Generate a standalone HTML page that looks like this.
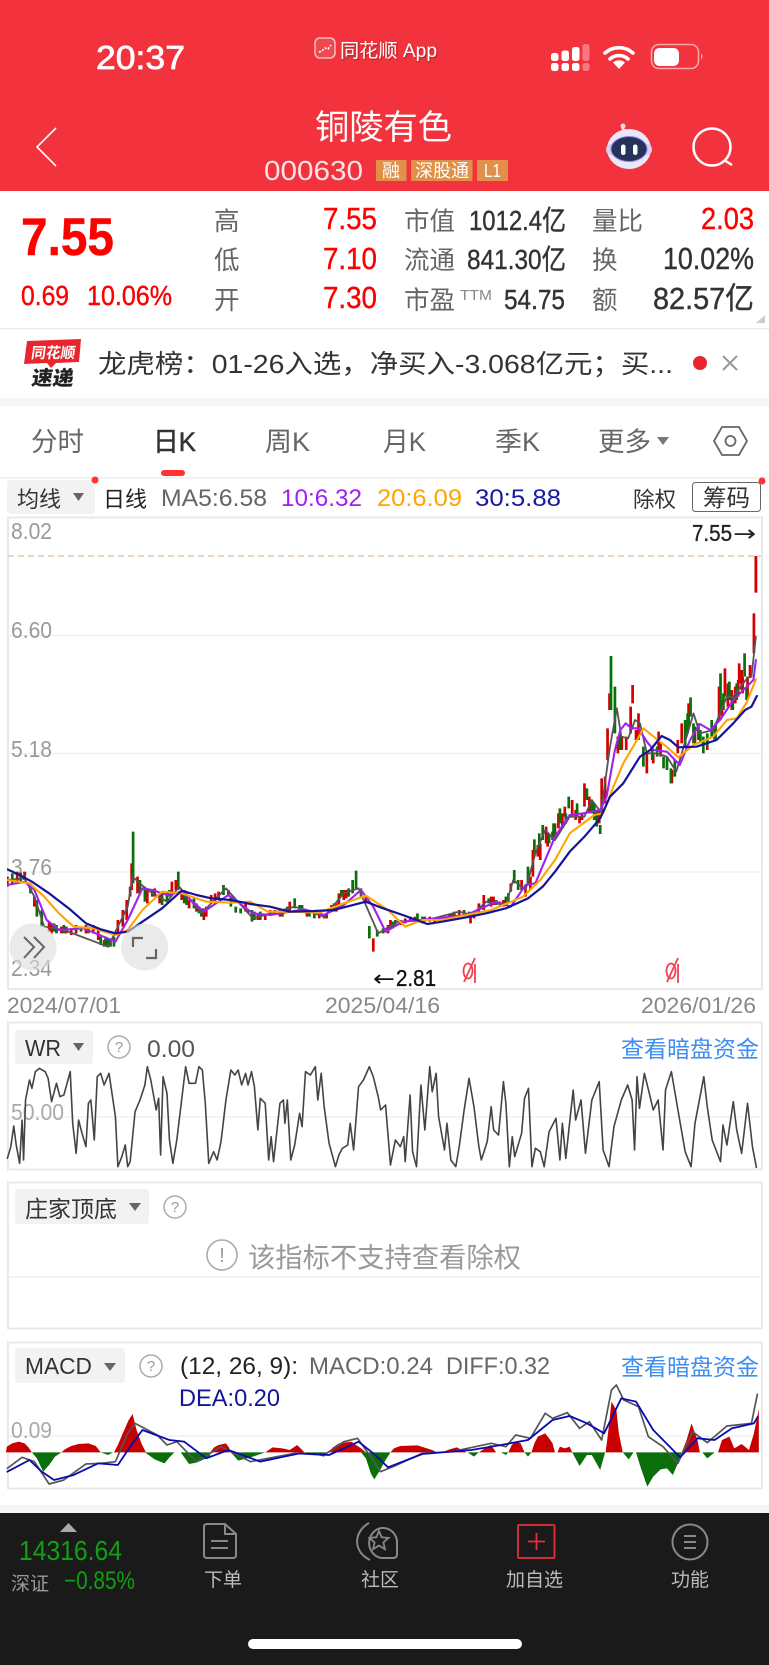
<!DOCTYPE html>
<html lang="zh"><head><meta charset="utf-8"><title>铜陵有色</title>
<style>
html,body{margin:0;padding:0;background:#fff}
svg{display:block}
text{font-family:"Liberation Sans","Noto Sans CJK SC",sans-serif}
.v *{vector-effect:non-scaling-stroke}
.l{fill:none;stroke-linejoin:round;stroke-linecap:round}
</style></head><body>
<svg width="769" height="1665" viewBox="0 0 769 1665" xmlns="http://www.w3.org/2000/svg">
<defs><clipPath id="c"><rect x="7" y="518" width="755" height="470"/></clipPath>
<filter id="s" x="-10%" y="-20%" width="120%" height="150%"><feDropShadow dx="1" dy="1" stdDeviation=".7" flood-color="#7a1016" flood-opacity=".6"/></filter></defs>
<rect width="769" height="1665" fill="#fff"/>
<rect width="769" height="191" fill="#f2323c"/>
<!-- status -->
<text x="96" y="69" font-size="33" font-weight="400" stroke="#fff" stroke-width=".7" fill="#fff" textLength="89" lengthAdjust="spacingAndGlyphs">20:37</text>
<rect x="315" y="38" width="20" height="20" rx="5" fill="#f04a50" stroke="#f9c0c2" stroke-width="1.500"/>
<path d="M319 52l3-1 3-3 3 1 3-4" stroke="#fff" stroke-width="1.600" fill="none" stroke-dasharray="2 1.500"/>
<text x="340" y="57" font-size="19" fill="#fff" filter="url(#s)" textLength="97" lengthAdjust="spacingAndGlyphs">同花顺 App</text>
<g fill="#fff">
<rect x="551" y="53" width="7.500" height="8" rx="2.500"/><rect x="561.500" y="50.500" width="7.500" height="10.500" rx="2.500"/><rect x="572" y="47" width="7.500" height="14" rx="2.500"/>
<rect x="551" y="63" width="7.500" height="8" rx="2.500"/><rect x="561.500" y="63" width="7.500" height="8" rx="2.500"/><rect x="572" y="63" width="7.500" height="8" rx="2.500"/>
<rect x="582.500" y="44" width="7" height="17" rx="2.500" opacity=".35"/><rect x="582.500" y="63" width="7" height="8" rx="2.500" opacity=".35"/>
<path d="M619 69l-6-6.500a9 9 0 0 1 12 0z"/>
</g>
<path d="M605 53a21 21 0 0 1 28 0M610 59a13.500 13.500 0 0 1 18 0" fill="none" stroke="#fff" stroke-width="3.600" stroke-linecap="round"/>
<rect x="651.500" y="44.500" width="47" height="24" rx="7.500" fill="none" stroke="#f9a8ac" stroke-width="1.500"/>
<rect x="654" y="48" width="25" height="18" rx="5.500" fill="#fff"/>
<path d="M701 53q3 3.500 0 7z" fill="#f9a8ac"/>
<!-- nav -->
<path d="M56 128L37 147 56 166" fill="none" stroke="#fff" stroke-width="1.600"/>
<text x="315" y="139" font-size="34" fill="#fff" textLength="137" lengthAdjust="spacingAndGlyphs">铜陵有色</text>
<text x="264" y="180" font-size="28" fill="#fbe3e4" textLength="99" lengthAdjust="spacingAndGlyphs">000630</text>
<g fill="#e09049"><rect x="376" y="160" width="30.500" height="21"/><rect x="411" y="160" width="61.500" height="21"/><rect x="477" y="160" width="31" height="21"/></g>
<g fill="#fff" font-size="18"><text x="382" y="177">融</text><text x="415" y="177" textLength="54" lengthAdjust="spacingAndGlyphs">深股通</text><text x="484" y="177" textLength="17" lengthAdjust="spacingAndGlyphs">L1</text></g>
<!-- robot -->
<path d="M625 130q-4-1-2-4" stroke="#f4e6e6" stroke-width="2" fill="none"/><circle cx="623" cy="126" r="2.500" fill="#f2dede"/>
<ellipse cx="629" cy="149" rx="22" ry="20" fill="#e9e8f8"/>
<rect x="606" y="144" width="46" height="11" rx="5" fill="#d3d1ee"/>
<ellipse cx="629" cy="149" rx="18" ry="12.500" fill="#25325a" stroke="#9c7be8" stroke-width="1"/>
<rect x="621" y="144.500" width="4.500" height="10.500" rx="2.200" fill="#fff"/><rect x="633" y="144.500" width="4.500" height="10.500" rx="2.200" fill="#fff"/>
<circle cx="712" cy="147" r="18.500" fill="none" stroke="#fff" stroke-width="2.500"/><path d="M724 160L732 165" stroke="#fff" stroke-width="2.500"/>
<!-- quote -->
<g fill="#f00" stroke="#f00" stroke-width=".4">
<text x="21" y="255" font-size="53" font-weight="700" textLength="93" lengthAdjust="spacingAndGlyphs">7.55</text>
<text x="21" y="305" font-size="28" textLength="48" lengthAdjust="spacingAndGlyphs">0.69</text>
<text x="87" y="305" font-size="28" textLength="85" lengthAdjust="spacingAndGlyphs">10.06%</text>
<g font-size="30.500"><text x="323" y="229" textLength="54" lengthAdjust="spacingAndGlyphs">7.55</text><text x="323" y="269" textLength="54" lengthAdjust="spacingAndGlyphs">7.10</text><text x="323" y="308" textLength="54" lengthAdjust="spacingAndGlyphs">7.30</text><text x="701" y="229" textLength="53" lengthAdjust="spacingAndGlyphs">2.03</text></g>
</g>
<g fill="#666" font-size="25.500">
<text x="214" y="230">高</text><text x="214" y="269">低</text><text x="214" y="309">开</text>
<text x="404" y="230">市值</text><text x="404" y="269">流通</text><text x="404" y="309">市盈</text>
<text x="592" y="230">量比</text><text x="592" y="269">换</text><text x="592" y="309">额</text>
</g>
<text x="460" y="300" font-size="15" fill="#888" textLength="32" lengthAdjust="spacingAndGlyphs">TTM</text>
<g fill="#333" stroke="#333" stroke-width=".4" font-size="28">
<text x="469" y="230" textLength="97" lengthAdjust="spacingAndGlyphs">1012.4亿</text>
<text x="467" y="269" textLength="99" lengthAdjust="spacingAndGlyphs">841.30亿</text>
<text x="504" y="309" textLength="61" lengthAdjust="spacingAndGlyphs">54.75</text>
<text x="663" y="269" font-size="30.500" textLength="91" lengthAdjust="spacingAndGlyphs">10.02%</text>
<text x="653" y="309" font-size="30.500" textLength="101" lengthAdjust="spacingAndGlyphs">82.57亿</text>
</g>
<path d="M765 315v8h-9z" fill="#ccc"/>
<rect y="328" width="769" height="1.500" fill="#ebebeb"/>
<!-- news -->
<path d="M27 341L81 339 79 362 56 363 51 368 47 363 24 364z" fill="#e8262e"/>
<text x="31" y="358" font-size="15" font-weight="700" fill="#fff" transform="skewX(-8) translate(50 0)" textLength="44" lengthAdjust="spacingAndGlyphs">同花顺</text>
<text x="32" y="385" font-size="20" font-weight="900" fill="#222" transform="skewX(-8) translate(53 0)" textLength="42" lengthAdjust="spacingAndGlyphs">速递</text>
<text x="98" y="373" font-size="26" fill="#333" textLength="575" lengthAdjust="spacingAndGlyphs">龙虎榜&#xFF1A;01-26入选&#xFF0C;净买入-3.068亿元&#xFF1B;买...</text>
<circle cx="700" cy="363" r="7" fill="#e8252e"/>
<path d="M723 356l14 14M737 356l-14 14" stroke="#999" stroke-width="2"/>
<rect y="398" width="769" height="8" fill="#f5f5f5"/>
<!-- tabs -->
<g font-size="26.500" fill="#666">
<text x="31" y="451">分时</text>
<text x="265" y="451" textLength="45" lengthAdjust="spacingAndGlyphs">周K</text>
<text x="383" y="451" textLength="43" lengthAdjust="spacingAndGlyphs">月K</text>
<text x="495" y="451" textLength="45" lengthAdjust="spacingAndGlyphs">季K</text>
<text x="598" y="451">更多</text>
<text x="153" y="451" fill="#333" stroke="#333" stroke-width=".5" textLength="43" lengthAdjust="spacingAndGlyphs">日K</text>
</g>
<path d="M657 437h12l-6 8z" fill="#777"/>
<path d="M714 441L722 427H739L747 441 739 455H722z" fill="none" stroke="#666" stroke-width="1.800"/><circle cx="730.500" cy="441" r="5" fill="none" stroke="#666" stroke-width="1.800"/>
<rect x="161" y="470" width="24" height="6" rx="3" fill="#f33"/>
<rect y="477" width="769" height="1.500" fill="#eee"/>
<!-- legend -->
<rect x="7" y="480" width="88" height="34" rx="3" fill="#f2f2f2"/>
<circle cx="95" cy="480" r="3.500" fill="#f33"/><circle cx="762" cy="481" r="3.500" fill="#f33"/>
<text x="17" y="507" font-size="22" fill="#333">均线</text><path d="M73 493h11l-5.500 8z" fill="#666"/>
<text x="103" y="507" font-size="22" fill="#222">日线</text>
<text x="633" y="507" font-size="21.500" fill="#333">除权</text>
<g font-size="24.500">
<text x="161" y="506" fill="#666" textLength="106" lengthAdjust="spacingAndGlyphs">MA5:6.58</text>
<text x="281" y="506" fill="#a020f0" textLength="81" lengthAdjust="spacingAndGlyphs">10:6.32</text>
<text x="377" y="506" fill="#ffa500" textLength="85" lengthAdjust="spacingAndGlyphs">20:6.09</text>
<text x="475" y="506" fill="#1a1aa0" textLength="86" lengthAdjust="spacingAndGlyphs">30:5.88</text>
</g>
<rect x="692.500" y="482.500" width="68" height="29" rx="3" fill="#fff" stroke="#666" stroke-width="1"/>
<text x="703" y="506" font-size="23.500" fill="#333">筹码</text>
<!-- main chart -->
<rect x="8" y="517.500" width="754" height="471.500" fill="#fff" stroke="#e8e8e8" stroke-width="2"/>
<path d="M8 635.500H761M8 753.500H761M8 872H761" stroke="#eee" stroke-width="1.200"/>
<path d="M8 556H761" stroke="#dcc09c" stroke-width="1.200" stroke-dasharray="6 4"/>
<g fill="#999" font-size="23">
<text x="11" y="539" textLength="41" lengthAdjust="spacingAndGlyphs">8.02</text>
<text x="11" y="638" textLength="41" lengthAdjust="spacingAndGlyphs">6.60</text>
<text x="11" y="757" textLength="41" lengthAdjust="spacingAndGlyphs">5.18</text>
<text x="11" y="875" textLength="41" lengthAdjust="spacingAndGlyphs">3.76</text>
</g>
<g clip-path="url(#c)"><g class="v" transform="translate(0 720) scale(.49115 .33333)">
<path class="l" stroke="#d40000" stroke-width="2.700" style="stroke-linecap:butt" d="M15 470V500M35 455V490M50 455V480M70 530V560M105 610V640M125 620V640M145 625V645M175 615V640M190 615V640M212 660V680M240 600V640M250 570V620M258 540V600M265 500V530M268 430V510M280 470V520M300 505V550M315 505V530M350 485V515M358 480V510M385 540V565M415 565V600M430 525V545M445 515V540M465 510V530M505 570V580M525 580V600M540 585V600M550 570V585M590 545V575M570 575V590M650 580V595M675 555V575M690 520V560M700 510V540M745 530V550M760 655V695M795 600V625M815 600V615M835 590V605M875 590V605M905 590V600M920 580V595M935 570V590M958 590V610M975 550V580M985 525V570M1005 530V555M1040 490V515M1062 480V510M1080 470V510M1085 390V470M1095 375V410M1112 320V370M1125 335V360M1137 280V325M1150 260V290M1165 240V290M1190 190V260M1180 290V310M1210 285V300M1225 175V270M1232 170V250M1237 25V120M1241 -80V-30M1288 -105V-50M1284 -40V40M1300 -20V60M1266 50V90M1275 50V90M1317 100V160M1341 35V90M1368 150V190M1388 10V70M1402 -50V20M1464 -100V0M1476 -155V-70M1497 -100V-50M1505 -170V-110M1510 -150V-90M1527 -165V-130M1535 -320V-200
M1258 50V100M1295 30V60M1330 100V130M1345 70V110M1380 60V100M1415 20V70M1440 60V90M1455 20V60M1470 -60V-10M1482 -110V-40M1490 -90V-30M1503 -120V-70M1512 -130V-80M1522 -130V-70M1070 500V530M1100 370V420M1115 340V380M1130 310V350M1145 280V320M1172 270V300M1185 280V300M1200 230V280M1220 270V310M155 620V640M100 605V635M135 620V640M200 630V660M325 520V550M370 510V540M400 550V575M420 560V590M438 520V550M475 530V550M500 550V575M560 570V585M625 570V590M665 580V595M685 550V575M705 510V535M790 615V640M825 595V610M845 590V605M895 595V605M915 585V600M965 575V595M1000 530V560M1025 540V560"/>
<path class="l" stroke="#d40000" stroke-width="2.800" style="stroke-linecap:butt" d="M1539 -492V-382"/>
<path class="l" stroke="#0a6e0a" stroke-width="2.700" style="stroke-linecap:butt" d="M25 460V490M42 458V485M62 490V520M75 540V590M85 570V620M115 615V640M155 615V635M165 620V635M205 650V675M220 655V682M232 650V680M271 335V490M285 480V520M295 500V545M330 520V555M345 510V530M363 455V510M375 510V550M395 535V565M405 560V580M455 495V525M480 560V578M490 565V580M513 570V605M530 575V600M575 580V590M600 535V565M615 555V575M640 580V595M660 585V595M680 550V575M710 505V530M718 480V520M725 452V510M735 505V530M752 618V655M768 630V650M780 625V640M805 600V620M850 580V605M865 590V605M885 598V610M945 570V590M995 535V550M1018 545V560M1035 520V545M1047 450V490M1055 480V510M1088 358V400M1105 315V360M1118 340V370M1140 265V310M1158 230V265M1195 205V240M1205 240V280M1215 270V320M1222 315V342M1244 -192V-30M1252 -100V40M1310 80V140M1351 110V145M1366 145V190M1395 0V80M1406 -68V-10M1422 10V60M1432 50V100M1449 0V50M1467 -140V-30M1485 -115V-60M1516 -200V-130M1520 -100V-60
M1262 40V90M1328 90V120M1338 80V110M1358 110V150M1374 120V170M1400 -20V40M1412 10V70M1426 30V70M1440 40V80M1457 10V60M1473 -80V-30M1492 -70V-30M1500 -110V-60M1075 440V490M1098 340V380M1127 310V360M1152 280V310M1175 250V290M1210 250V300M110 610V635M130 615V640M180 620V640M215 650V680M225 655V680M310 510V530M340 515V545M380 520V555M410 565V590M470 530V560M518 575V600M585 560V575M610 555V570M630 570V590M695 510V530M800 605V625M860 590V610M925 575V595M955 575V590M1010 540V555M1030 530V550"/>
<polyline class="l" stroke="#555" stroke-width="1.800" points="15,480 50,475 70,530 90,620 130,630 220,680 260,560 270,470 300,510 340,545 365,500 410,580 460,505 515,595 600,560 660,590 700,520 730,505 770,640 810,605 870,600 935,575 960,585 990,545 1030,555 1045,480 1070,510 1090,400 1110,330 1130,360 1160,290 1190,290 1205,240 1225,280 1228,230 1242,80 1256,-35 1265,50 1279,55 1293,0 1303,10 1317,100 1338,100 1358,110 1377,155 1398,50 1412,-20 1425,40 1452,30 1480,-70 1493,-70 1521,-125 1530,-130 1539,-250"/>
<polyline class="l" stroke="#a020f0" stroke-width="2.100" points="15,495 50,485 70,510 95,600 120,630 170,625 235,665 260,600 290,505 310,510 340,525 370,515 415,575 465,525 515,580 550,585 620,568 660,585 700,555 735,510 760,560 785,635 820,605 870,598 950,585 1010,545 1040,560 1070,495 1090,490 1130,350 1160,285 1188,280 1222,270 1235,230 1252,90 1263,30 1274,10 1286,25 1300,25 1317,65 1331,90 1358,95 1384,135 1405,60 1425,12 1446,30 1466,0 1493,-60 1534,-120 1539,-180"/>
<polyline class="l" stroke="#ffa500" stroke-width="2.100" points="15,480 60,490 90,530 120,580 150,620 190,625 235,645 260,630 290,570 330,515 370,520 420,545 470,548 510,545 545,575 590,575 650,578 700,550 745,527 790,570 825,620 860,600 900,600 950,585 1000,570 1065,530 1100,480 1130,420 1160,340 1210,285 1228,280 1249,200 1269,130 1297,60 1310,25 1331,50 1357,80 1381,112 1412,75 1452,50 1480,0 1500,-5 1521,-55 1539,-122"/>
<polyline class="l" stroke="#14149a" stroke-width="2.200" points="15,448 40,465 65,485 100,520 140,565 175,610 205,628 235,640 260,635 290,605 330,565 370,512 400,525 430,535 470,540 510,552 550,560 590,575 640,573 680,570 745,545 780,565 820,585 870,612 900,605 950,592 990,580 1030,565 1075,535 1105,500 1130,455 1160,395 1190,350 1222,295 1242,230 1269,190 1303,110 1324,90 1347,48 1364,60 1381,82 1418,80 1459,60 1493,10 1517,-30 1530,-40 1541,-72"/>
</g></g>
<text x="692" y="541" font-size="23" fill="#222" stroke="#222" stroke-width=".35" textLength="40" lengthAdjust="spacingAndGlyphs">7.55</text>
<text x="733" y="541" font-size="22" fill="#222" style="font-family:'DejaVu Sans',sans-serif" textLength="23" lengthAdjust="spacingAndGlyphs">→</text>
<text x="373" y="986" font-size="22" fill="#111" style="font-family:'DejaVu Sans',sans-serif" textLength="22" lengthAdjust="spacingAndGlyphs">←</text>
<text x="396" y="986" font-size="23" fill="#111" stroke="#111" stroke-width=".35" textLength="40" lengthAdjust="spacingAndGlyphs">2.81</text>
<g fill="none" stroke="#f04250" stroke-width="1.800"><ellipse cx="468" cy="971" rx="4.500" ry="7.500"/><path d="M475 958L464 982M475 964V983"/></g>
<g fill="none" stroke="#f04250" stroke-width="1.800" transform="translate(203 0)"><ellipse cx="468" cy="971" rx="4.500" ry="7.500"/><path d="M475 958L464 982M475 964V983"/></g>
<text x="11" y="976" font-size="23" fill="#999" textLength="41" lengthAdjust="spacingAndGlyphs">2.34</text>
<circle cx="33" cy="947" r="23.500" fill="#ddd" fill-opacity=".62"/><circle cx="144.500" cy="947" r="23.500" fill="#ddd" fill-opacity=".62"/>
<path d="M24 937L34 947 24 958M34 937L44 947 34 958" fill="none" stroke="#666" stroke-width="2"/>
<path d="M133 947V938H143M146 958H156V949" fill="none" stroke="#666" stroke-width="2.200"/>
<g fill="#888" font-size="22.500">
<text x="7" y="1013" textLength="114" lengthAdjust="spacingAndGlyphs">2024/07/01</text>
<text x="325" y="1013" textLength="115" lengthAdjust="spacingAndGlyphs">2025/04/16</text>
<text x="641" y="1013" textLength="115" lengthAdjust="spacingAndGlyphs">2026/01/26</text>
</g>
<!-- WR -->
<rect x="8" y="1022.500" width="754" height="147" fill="#fff" stroke="#e8e8e8" stroke-width="1.800"/>
<path d="M8 1117H761" stroke="#eee" stroke-width="1.200"/>
<text x="11" y="1120" font-size="23" fill="#aaa" textLength="53" lengthAdjust="spacingAndGlyphs">50.00</text>
<rect x="15" y="1030" width="78" height="34" rx="3" fill="#f2f2f2"/>
<text x="25" y="1056" font-size="23" fill="#333" textLength="36" lengthAdjust="spacingAndGlyphs">WR</text><path d="M73 1043h11l-5.500 8z" fill="#666"/>
<circle cx="119" cy="1047" r="11" fill="none" stroke="#aaa" stroke-width="1.500"/>
<text x="119" y="1052" font-size="15" fill="#999" text-anchor="middle">?</text>
<text x="147" y="1057" font-size="24" fill="#555" textLength="48" lengthAdjust="spacingAndGlyphs">0.00</text>
<text x="621" y="1057" font-size="23" fill="#3d8ef0">查看暗盘资金</text>
<g class="v" transform="translate(0 1020) scale(.49115 .33333)">
<polyline class="l" stroke="#444" stroke-width="1.600" points="15,415 22,380 28,318 33,375 40,430 45,300 48,420 52,240 60,180 65,205 72,155 80,145 92,155 98,175 105,245 115,190 122,230 130,225 143,155 148,310 155,400 160,300 167,340 175,380 180,250 185,240 192,360 198,170 205,160 212,195 222,160 235,290 240,440 248,410 255,375 260,440 265,425 275,275 285,240 295,195 300,140 307,180 318,270 323,235 327,405 332,170 340,220 345,360 352,430 360,360 378,140 385,190 398,190 405,140 412,150 418,250 425,430 435,395 442,420 450,365 460,240 470,150 478,165 485,150 492,195 500,160 505,195 512,155 518,200 525,330 530,235 540,250 547,420 552,350 557,425 570,250 577,240 580,310 585,240 592,420 600,375 610,280 615,320 622,155 632,165 642,140 647,240 654,160 660,260 670,370 683,440 690,405 697,385 708,375 713,310 720,390 730,200 740,180 752,140 760,170 770,230 775,270 785,255 795,435 805,360 815,380 822,350 825,425 835,225 840,395 848,440 857,195 865,330 875,140 880,215 888,160 893,290 905,390 910,310 918,420 928,440 935,380 945,270 955,175 965,260 975,380 980,420 992,365 1000,260 1005,330 1015,345 1025,185 1030,250 1037,440 1043,350 1048,410 1062,340 1068,235 1076,205 1083,440 1090,385 1100,395 1108,440 1118,335 1132,295 1140,420 1145,310 1152,415 1167,210 1172,300 1183,240 1192,400 1205,240 1220,185 1228,390 1240,440 1250,320 1265,240 1278,195 1287,240 1292,390 1297,170 1302,265 1312,160 1322,220 1330,270 1340,240 1350,390 1355,210 1367,155 1378,250 1395,395 1407,440 1415,310 1433,170 1440,260 1450,360 1467,425 1472,315 1480,375 1493,245 1500,330 1510,400 1522,250 1532,380 1540,442"/>
</g>
<!-- 庄家 -->
<rect x="8" y="1182.500" width="754" height="146" fill="#fff" stroke="#e8e8e8" stroke-width="1.800"/>
<path d="M8 1277H761" stroke="#eee" stroke-width="1.200"/>
<rect x="15" y="1189" width="134" height="35" rx="3" fill="#f2f2f2"/>
<text x="25" y="1217" font-size="23" fill="#333">庄家顶底</text><path d="M129 1203h12l-6 8z" fill="#666"/>
<circle cx="175" cy="1207" r="11" fill="none" stroke="#aaa" stroke-width="1.500"/><text x="175" y="1212" font-size="15" fill="#999" text-anchor="middle">?</text>
<circle cx="222" cy="1255" r="15" fill="none" stroke="#aaa" stroke-width="1.600"/><text x="222" y="1262" font-size="20" fill="#999" text-anchor="middle">!</text>
<text x="248" y="1267" font-size="27.300" fill="#999">该指标不支持查看除权</text>
<!-- MACD -->
<rect x="8" y="1342.500" width="754" height="146" fill="#fff" stroke="#e8e8e8" stroke-width="1.800"/>
<path d="M8 1436H761" stroke="#eee" stroke-width="1.200"/>
<g class="v" transform="translate(0 1340) scale(.49115 .33333)">
<path fill="#c80000" d="M12 337L14 320 25 310 38 305 50 310 58 322 65 337ZM125 337L132 328 145 318 160 312 180 310 195 318 205 337ZM232 337L240 315 250 280 262 240 270 222 278 270 288 310 297 337ZM428 337L436 322 445 315 460 310 466 322 470 337ZM540 337L555 322 575 325 590 330 605 315 620 337ZM668 337L678 322 690 310 715 305 735 325 745 337ZM795 337L802 325 815 318 850 316 880 330 890 337ZM900 337L915 328 930 322 950 337ZM975 337L990 322 1000 315 1010 337ZM1035 337L1042 315 1050 305 1060 310 1068 337ZM1082 337L1088 310 1095 290 1110 280 1118 295 1125 310 1130 337ZM1135 337L1140 320 1150 325 1160 320 1165 337ZM1233 337L1238 280 1245 185 1255 210 1260 280 1268 337ZM1388 337L1398 300 1408 250 1420 300 1425 337ZM1462 337L1470 300 1485 290 1495 325 1510 312 1525 330 1535 280 1545 207V337Z"/>
<path fill="#0a6e0a" d="M65 337L75 355 88 395 100 375 112 350 125 337ZM205 337L220 345 230 337ZM295 337L315 358 335 370 345 352 355 337ZM368 337L385 372 400 368 428 350V337ZM470 337L485 362 515 350 540 337ZM620 337L660 350 668 337ZM735 337L745 355 755 400 762 418 772 395 785 360 795 337ZM952 337L965 350 975 337ZM1020 337L1030 345 1035 337ZM1068 337L1075 350 1082 337ZM1165 337L1180 378 1195 345 1205 345 1222 390 1232 337ZM1268 337L1280 358 1290 337ZM1295 337L1305 385 1318 440 1330 410 1345 388 1358 385 1370 405 1380 370 1388 337ZM1430 337L1440 355 1455 337Z"/>
<polyline class="l" stroke="#555" stroke-width="1.700" points="15,385 45,352 70,365 100,432 130,420 175,372 205,370 235,365 260,280 275,250 320,285 340,315 360,305 400,365 450,320 510,365 600,340 660,345 700,305 728,295 750,340 775,395 800,380 860,340 920,335 1000,310 1030,320 1050,285 1080,295 1110,220 1125,235 1155,218 1180,265 1200,245 1225,300 1245,150 1255,135 1270,180 1300,200 1320,290 1350,320 1380,370 1410,275 1440,308 1480,258 1500,255 1530,250 1542,163"/>
<polyline class="l" stroke="#0a0ab4" stroke-width="1.800" points="15,395 60,360 85,395 110,420 150,405 200,370 240,375 265,320 290,270 345,300 375,305 420,355 465,330 530,365 610,340 670,345 730,305 760,340 790,382 860,342 960,330 1020,315 1075,300 1125,240 1160,228 1195,250 1230,280 1265,175 1295,185 1330,270 1385,352 1420,295 1455,300 1490,265 1535,250 1543,230"/>
</g>
<text x="11" y="1438" font-size="23" fill="#aaa" textLength="41" lengthAdjust="spacingAndGlyphs">0.09</text>
<rect x="15" y="1348" width="110" height="35" rx="3" fill="#f2f2f2"/>
<text x="25" y="1374" font-size="23" fill="#333" textLength="67" lengthAdjust="spacingAndGlyphs">MACD</text><path d="M104 1363h12l-6 8z" fill="#666"/>
<circle cx="151" cy="1366" r="11" fill="none" stroke="#aaa" stroke-width="1.500"/><text x="151" y="1371" font-size="15" fill="#999" text-anchor="middle">?</text>
<text x="180" y="1374" font-size="24" fill="#222" textLength="118" lengthAdjust="spacingAndGlyphs">(12, 26, 9):</text>
<text x="309" y="1374" font-size="24" fill="#666" textLength="124" lengthAdjust="spacingAndGlyphs">MACD:0.24</text>
<text x="446" y="1374" font-size="24" fill="#666" textLength="104" lengthAdjust="spacingAndGlyphs">DIFF:0.32</text>
<text x="179" y="1406" font-size="24" fill="#14149a" textLength="101" lengthAdjust="spacingAndGlyphs">DEA:0.20</text>
<text x="621" y="1375" font-size="23" fill="#3d8ef0">查看暗盘资金</text>
<!-- bottom -->
<rect y="1505" width="769" height="8" fill="#f5f5f5"/>
<rect y="1513" width="769" height="152" fill="#1a1a1a"/>
<path d="M60 1532L68.500 1523 77 1532z" fill="#aaa"/>
<text x="19" y="1560" font-size="28" fill="#12a012" textLength="103" lengthAdjust="spacingAndGlyphs">14316.64</text>
<text x="11" y="1590" font-size="19" fill="#999">深证</text>
<text x="64" y="1589" font-size="25" fill="#12a012" textLength="71" lengthAdjust="spacingAndGlyphs">−0.85%</text>
<g fill="none" stroke="#888" stroke-width="2">
<path d="M225 1524H207Q204 1524 204 1527V1555Q204 1558 207 1558H233Q236 1558 236 1555V1534ZM225 1524V1534H236M211 1541H228M211 1548H228"/>
<path d="M397 1541A14 15 0 1 0 383 1558H393Q397 1558 397 1554Z"/>
<path d="M369 1523C353 1532 353 1552 370 1560"/>
<polygon stroke-width="1.800" points="379,1531 381.700,1537.300 388.500,1537.900 383.400,1542.400 384.900,1549.100 379,1545.600 373.100,1549.100 374.600,1542.400 369.500,1537.900 376.300,1537.300"/>
<circle cx="690" cy="1542" r="17.500"/>
<path d="M684 1536H696M684 1542H696M684 1548H696"/>
</g>
<rect x="518" y="1525" width="36.500" height="33" rx="1" fill="none" stroke="#e5303a" stroke-width="1.800"/>
<path d="M528 1541.500H545M536.500 1533V1550" stroke="#e5303a" stroke-width="1.800"/>
<g font-size="19" fill="#bbb">
<text x="204" y="1586">下单</text><text x="361" y="1586">社区</text>
<text x="506" y="1586">加自选</text><text x="671" y="1586">功能</text>
</g>
<rect x="248" y="1639" width="274" height="10" rx="5" fill="#fff"/>
</svg>
</body></html>
